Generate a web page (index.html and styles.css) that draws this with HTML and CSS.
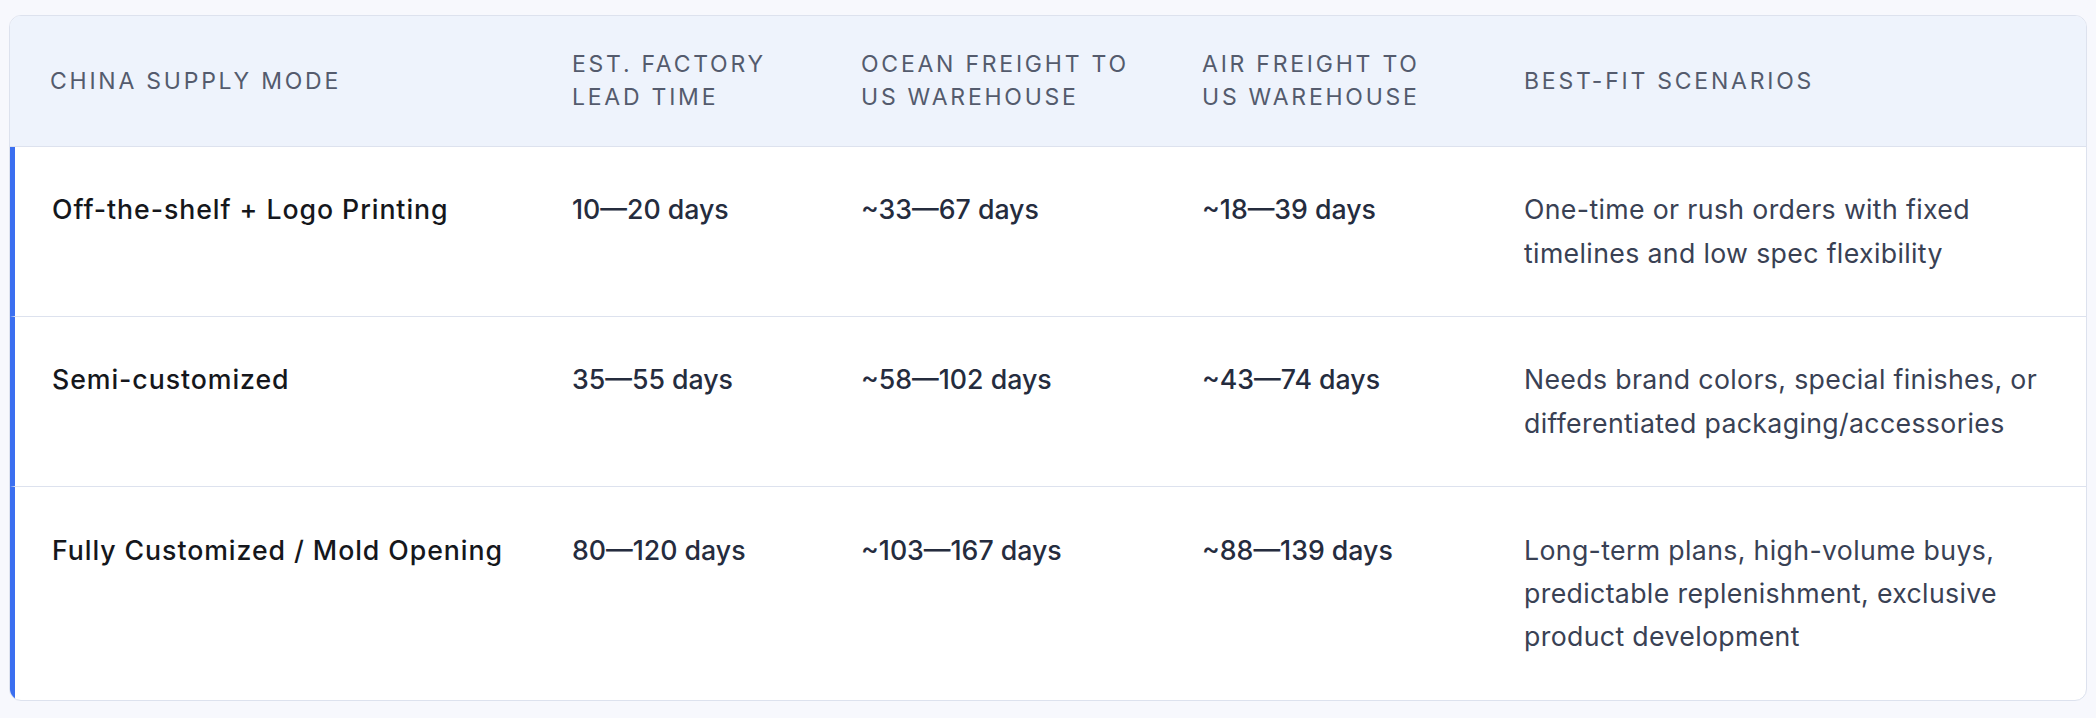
FILE: index.html
```html
<!DOCTYPE html>
<html lang="en">
<head>
<meta charset="utf-8">
<title>China Supply Mode Lead Times</title>
<link rel="stylesheet" href="styles.css">
</head>
<body>
<div class="page">
  <div class="card">
    <table class="lead-table">
      <colgroup>
        <col class="c1">
        <col class="c2">
        <col class="c3">
        <col class="c4">
        <col class="c5">
      </colgroup>
      <thead>
        <tr>
          <th>China Supply Mode</th>
          <th>Est. Factory<br>Lead Time</th>
          <th>Ocean Freight to<br>US Warehouse</th>
          <th>Air Freight to<br>US Warehouse</th>
          <th>Best-Fit Scenarios</th>
        </tr>
      </thead>
      <tbody>
        <tr>
          <td class="mode">Off-the-shelf + Logo Printing</td>
          <td class="days">10—20 days</td>
          <td class="days">~33—67 days</td>
          <td class="days">~18—39 days</td>
          <td class="desc">One-time or rush orders with fixed timelines and low spec flexibility</td>
        </tr>
        <tr>
          <td class="mode">Semi-customized</td>
          <td class="days">35—55 days</td>
          <td class="days">~58—102 days</td>
          <td class="days">~43—74 days</td>
          <td class="desc">Needs brand colors, special finishes, or differentiated packaging/accessories</td>
        </tr>
        <tr>
          <td class="mode">Fully Customized / Mold Opening</td>
          <td class="days">80—120 days</td>
          <td class="days">~103—167 days</td>
          <td class="days">~88—139 days</td>
          <td class="desc">Long-term plans, high-volume buys, predictable replenishment, exclusive product development</td>
        </tr>
      </tbody>
    </table>
  </div>
</div>
</body>
</html>
```

FILE: styles.css
```css
html, body {
  margin: 0;
  padding: 0;
  background: #f7f8fd;
}

body {
  font-family: Inter, "Noto Sans", "Noto Sans CJK SC", sans-serif;
  color: #1f2433;
}

.page {
  padding: 15px 9px 21px;
}

.card {
  background: #ffffff;
  border: 1px solid #dde2ee;
  border-radius: 12px;
  overflow: hidden;
}

.lead-table {
  width: 100%;
  table-layout: fixed;
  border-collapse: separate;
  border-spacing: 0;
}

.c1 { width: 522px; }
.c2 { width: 289px; }
.c3 { width: 341px; }
.c4 { width: 322px; }

.lead-table th {
  background: #eef3fc;
  border-bottom: 1px solid #dde2ee;
  padding: 32px 20px 32px 40px;
  text-align: left;
  vertical-align: middle;
  font-size: 23px;
  line-height: 33px;
  font-weight: 400;
  letter-spacing: 0.12em;
  text-transform: uppercase;
  color: #545b6d;
  white-space: nowrap;
}

.lead-table td {
  padding: 41.3px 34px 41.3px 40px;
  vertical-align: top;
  font-size: 26.7px;
  line-height: 43.3px;
  border-top: 1px solid #dde2ee;
}

.lead-table tbody tr:first-child td {
  border-top: none;
}

.lead-table td.mode {
  border-left: 5px solid #3b6ff0;
  padding-left: 37px;
  padding-right: 16px;
  font-weight: 500;
  letter-spacing: 0.035em;
  color: #15171c;
  white-space: nowrap;
}

.lead-table td.days {
  font-weight: 500;
  color: #252c3e;
}

.lead-table td.desc {
  font-weight: 400;
  letter-spacing: 0.013em;
  color: #394154;
}
```
